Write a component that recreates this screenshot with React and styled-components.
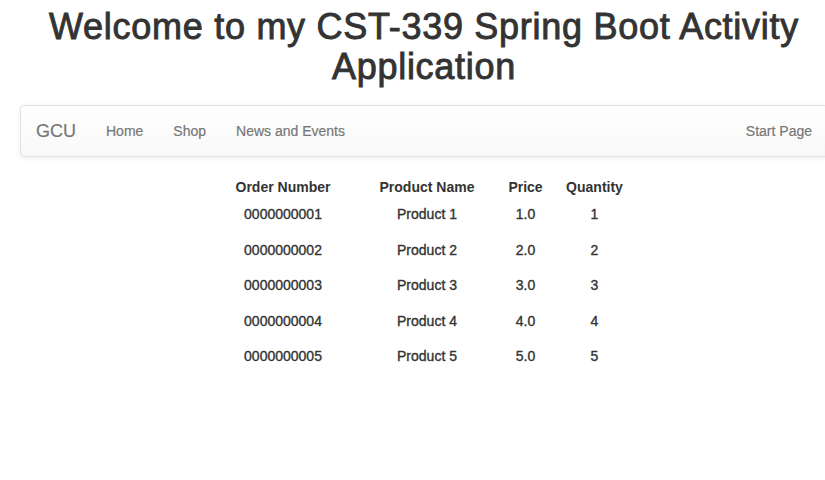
import React from "react";
import styled, { createGlobalStyle } from "styled-components";

const Global = createGlobalStyle`
  html, body { margin: 0; padding: 0; background: #fff; overflow: hidden; }
  body {
    font-family: "Liberation Sans", Arial, sans-serif;
    font-size: 14px;
    line-height: 1.42857;
    color: #333;
  }
`;

const Page = styled.div`
  width: 848px;
  padding: 0 20px;
  box-sizing: border-box;
`;

const Title = styled.h1`
  margin: 7px 0 19px;
  font-size: 36px;
  font-weight: 500;
  line-height: 1.1;
  letter-spacing: 0.72px;
  text-align: center;
  color: #333;
  -webkit-text-stroke: 0.9px #333;
`;

const Navbar = styled.nav`
  display: flex;
  align-items: center;
  min-height: 50px;
  padding: 0 15px;
  border: 1px solid #e3e3e3;
  border-radius: 4px;
  background: linear-gradient(to bottom, #ffffff 0%, #f8f8f8 100%);
  box-shadow: inset 0 1px 0 rgba(255, 255, 255, 0.15), 0 1px 5px rgba(0, 0, 0, 0.075);
  margin-bottom: 20px;
`;

const Brand = styled.a`
  display: block;
  margin-left: -15px;
  padding: 15px;
  font-size: 18px;
  line-height: 20px;
  color: #777;
  text-decoration: none;
  -webkit-text-stroke: 0.2px #777;
`;

const NavList = styled.ul`
  display: flex;
  list-style: none;
  margin: 0;
  padding: 0;
  margin-left: ${(p) => (p.$right ? "auto" : "0")};
  margin-right: ${(p) => (p.$right ? "-15px" : "0")};
`;

const NavLink = styled.a`
  display: block;
  padding: 15px;
  line-height: 20px;
  font-size: 14px;
  color: #777;
  text-decoration: none;
  -webkit-text-stroke: 0.2px #777;
`;

const Table = styled.table`
  margin: 0 auto;
  border-collapse: collapse;
  table-layout: fixed;
  width: 426px;
`;

const Th = styled.th`
  font-weight: 700;
  font-size: 14px;
  text-align: center;
  padding: 0;
  height: 20px;
  line-height: 20px;
  color: #333;
`;

const Td = styled.td`
  font-size: 14px;
  text-align: center;
  padding: 0;
  height: ${(p) => (p.$first ? "27px" : "35.5px")};
  vertical-align: bottom;
  line-height: 20px;
  color: #333;
  -webkit-text-stroke: 0.35px #333;
`;

const rows = [1, 2, 3, 4, 5].map((i) => ({
  num: String(i).padStart(10, "0"),
  name: `Product ${i}`,
  price: `${i}.0`,
  qty: i,
}));

export default function App() {
  return (
    <Page>
      <Global />
      <Title>Welcome to my CST-339 Spring Boot Activity Application</Title>
      <Navbar>
        <Brand href="#">GCU</Brand>
        <NavList>
          <li><NavLink href="#">Home</NavLink></li>
          <li><NavLink href="#">Shop</NavLink></li>
          <li><NavLink href="#">News and Events</NavLink></li>
        </NavList>
        <NavList $right>
          <li><NavLink href="#">Start Page</NavLink></li>
        </NavList>
      </Navbar>
      <Table>
        <colgroup>
          <col style={{ width: 144 }} />
          <col style={{ width: 144 }} />
          <col style={{ width: 53 }} />
          <col style={{ width: 85 }} />
        </colgroup>
        <thead>
          <tr>
            <Th>Order Number</Th>
            <Th>Product Name</Th>
            <Th>Price</Th>
            <Th>Quantity</Th>
          </tr>
        </thead>
        <tbody>
          {rows.map((r, idx) => (
            <tr key={r.num}>
              <Td $first={idx === 0}>{r.num}</Td>
              <Td $first={idx === 0}>{r.name}</Td>
              <Td $first={idx === 0}>{r.price}</Td>
              <Td $first={idx === 0}>{r.qty}</Td>
            </tr>
          ))}
        </tbody>
      </Table>
    </Page>
  );
}
